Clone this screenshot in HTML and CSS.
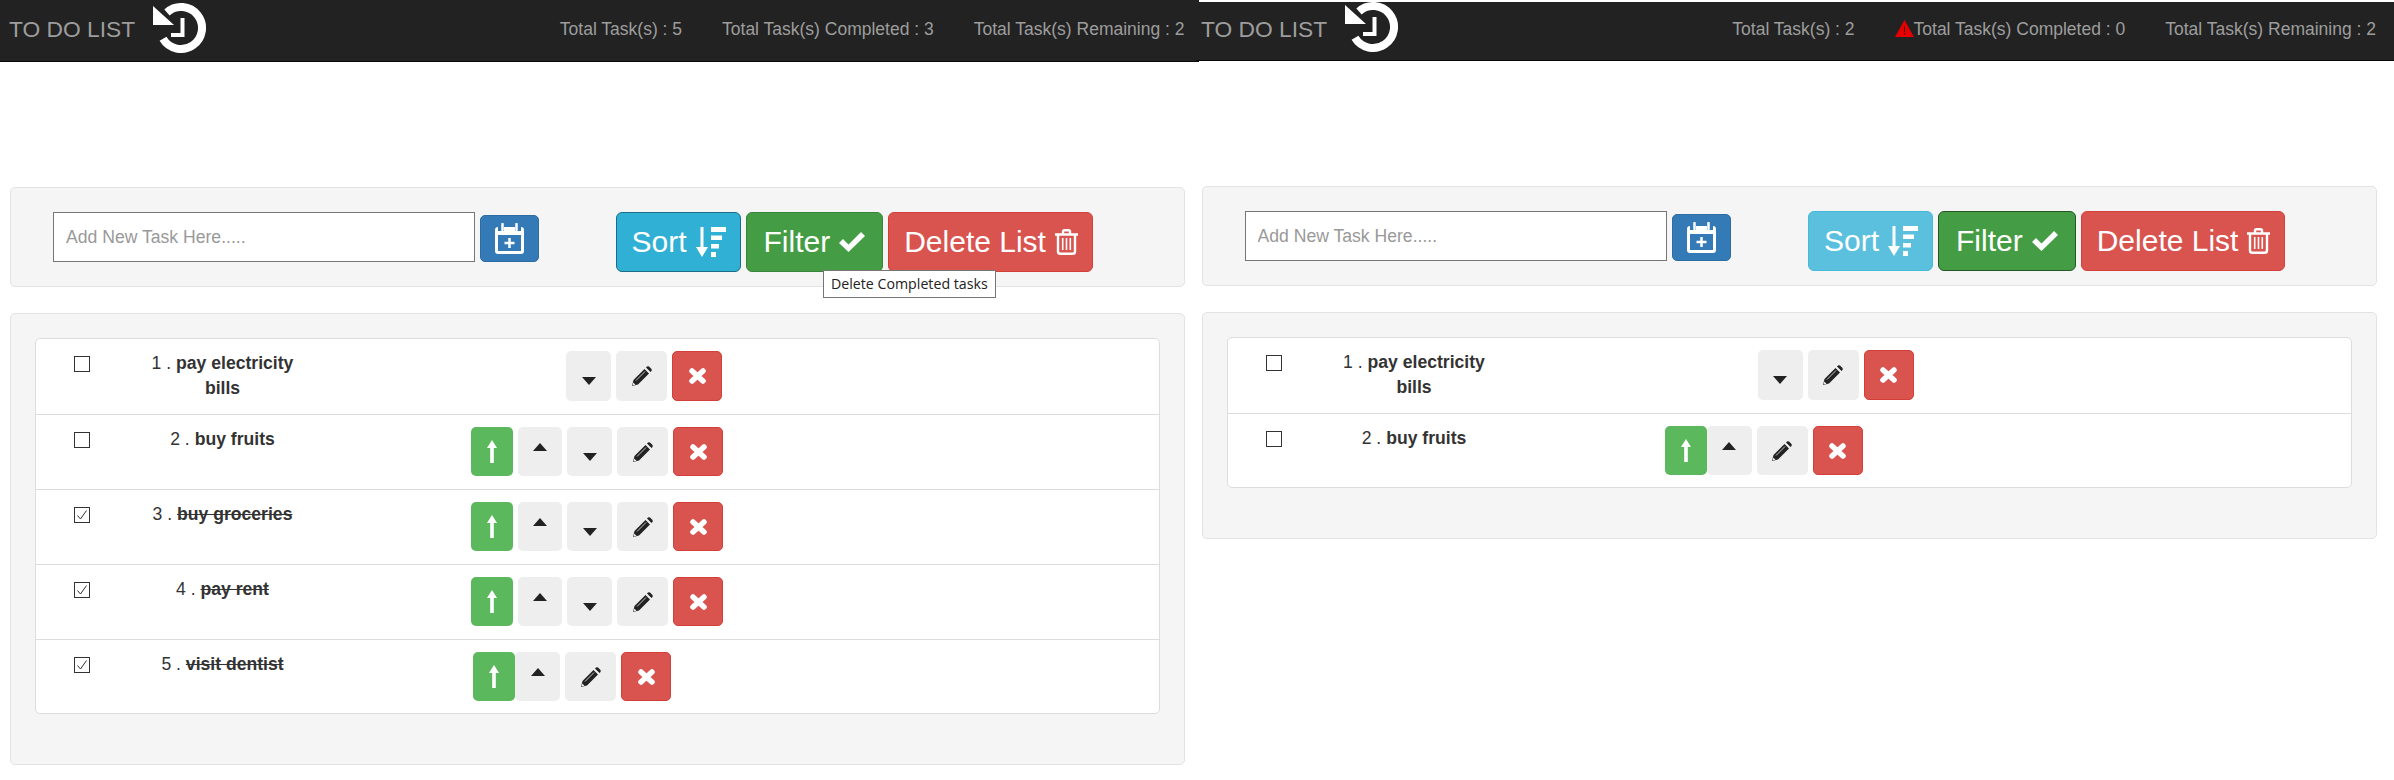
FILE: index.html

```html
<!DOCTYPE html>
<html>
<head>
  <title>To Do List</title>
  <link rel="stylesheet" href="styles.css">
</head>
<body>
  <svg class="sprite" xmlns="http://www.w3.org/2000/svg">
    <symbol id="i-history" viewBox="0 0 56 52">
      <path d="M16 9.4A21 21 0 1 1 12 35.8" fill="none" stroke="currentColor" stroke-width="8"/>
      <path d="M2 3V22H23Z" fill="currentColor"/>
      <path d="M31.5 15V32H20" fill="none" stroke="currentColor" stroke-width="4"/>
    </symbol>
    <symbol id="i-calendar" viewBox="0 0 29 31">
      <path d="M3 4H26Q29 4 29 7V28Q29 31 26 31H3Q0 31 0 28V7Q0 4 3 4ZM3 12V28H26V12Z" fill="currentColor" fill-rule="evenodd"/>
      <path d="M6 4V8M23 4V8" stroke="#337ab7" stroke-width="6"/>
      <path d="M7.5 1V7M21.5 1V7" stroke="currentColor" stroke-width="2.5" stroke-linecap="round"/>
      <path d="M14.5 15V25M9.5 20H19.5" stroke="currentColor" stroke-width="2.5"/>
    </symbol>
    <symbol id="i-sort" viewBox="0 0 30 30">
      <path d="M4.5 0H7.5V20H12L6 30L0 20H4.5ZM15 0H30V5H15ZM15 8.5H26V13H15ZM15 17H23V21.5H15ZM15 25H20V30H15Z" fill="currentColor"/>
    </symbol>
    <symbol id="i-check" viewBox="0 0 26 20">
      <path d="M0 11L4 7L9.5 12.5L22 0L26 4L9.5 20Z" fill="currentColor"/>
    </symbol>
    <symbol id="i-trash" viewBox="0 0 23 26">
      <path d="M0 5.5H23M8 5V2.5Q8 1.2 9.5 1.2H13.5Q15 1.2 15 2.5V5" fill="none" stroke="currentColor" stroke-width="2.4"/>
      <path d="M3 6V22.5Q3 24.8 5.5 24.8H17.5Q20 24.8 20 22.5V6" fill="none" stroke="currentColor" stroke-width="2.4"/>
      <path d="M7.7 9V21M11.5 9V21M15.3 9V21" stroke="currentColor" stroke-width="1.6"/>
    </symbol>
    <symbol id="i-pencil" viewBox="0 0 20 20">
      <path d="M12.5 3L17 7.5L6 18.5L0 20L1.5 14Z" fill="currentColor"/>
      <path d="M14 1.5L15 .5Q16 0 17 .5L19.5 3Q20 4 19.5 5L18.5 6Z" fill="currentColor"/>
      <path d="M4 14.5L13 5.5" stroke="#eee" stroke-width=".8"/>
      <path d="M1.2 16.5L3.5 18.8L.6 19.4Z" fill="#eee"/>
    </symbol>
    <symbol id="i-remove" viewBox="0 0 17 16">
      <path d="M3 3L14 13M14 3L3 13" stroke="currentColor" stroke-width="5.5" stroke-linecap="round"/>
    </symbol>
    <symbol id="i-arrow" viewBox="0 0 10 23">
      <path d="M5 0L10 8H6.8V23H3.2V8H0Z" fill="currentColor"/>
    </symbol>
    <symbol id="i-caret-up" viewBox="0 0 14 8">
      <path d="M7 0L14 8H0Z" fill="currentColor"/>
    </symbol>
    <symbol id="i-caret-down" viewBox="0 0 14 8">
      <path d="M0 0H14L7 8Z" fill="currentColor"/>
    </symbol>
  </svg>

  <div class="page">
    <!-- lista con 5 tareas -->
    <div class="pane pane-a">
      <div class="nav">
        <span class="brand">TO DO LIST</span>
        <svg class="logo"><use href="#i-history"></use></svg>
        <div class="stats">
          <span>Total Task(s) : 5</span>
          <span>Total Task(s) Completed : 3</span>
          <span>Total Task(s) Remaining : 2</span>
        </div>
      </div>

      <div class="panel toolbar">
        <input class="task-input" type="text" placeholder="Add New Task Here.....">
        <button class="btn-add"><svg class="icon-calendar"><use href="#i-calendar"></use></svg></button>
        <button class="btn-big btn-sort btn-sort-focus">Sort <svg class="icon-sort"><use href="#i-sort"></use></svg></button>
        <button class="btn-big btn-filter">Filter <svg class="icon-check"><use href="#i-check"></use></svg></button>
        <button class="btn-big btn-delete">Delete List <svg class="icon-trash"><use href="#i-trash"></use></svg></button>
        <div class="tooltip">Delete Completed tasks</div>
      </div>

      <div class="panel tasks">
        <ul class="list">
          <li class="row row-first">
            <input class="check" type="checkbox">
            <div class="task">1 . <b>pay electricity bills</b></div>
            <div class="actions actions-first">
              <button class="btn btn-green hidden"></button>
              <button class="btn btn-up hidden"></button>
              <button class="btn btn-down"><svg class="icon-caret"><use href="#i-caret-down"></use></svg></button>
              <button class="btn btn-edit"><svg class="icon-pencil"><use href="#i-pencil"></use></svg></button>
              <button class="btn btn-remove"><svg class="icon-remove"><use href="#i-remove"></use></svg></button>
            </div>
          </li>
          <li class="row">
            <input class="check" type="checkbox">
            <div class="task">2 . <b>buy fruits</b></div>
            <div class="actions">
              <button class="btn btn-green"><svg class="icon-arrow"><use href="#i-arrow"></use></svg></button>
              <button class="btn btn-up"><svg class="icon-caret"><use href="#i-caret-up"></use></svg></button>
              <button class="btn btn-down"><svg class="icon-caret"><use href="#i-caret-down"></use></svg></button>
              <button class="btn btn-edit"><svg class="icon-pencil"><use href="#i-pencil"></use></svg></button>
              <button class="btn btn-remove"><svg class="icon-remove"><use href="#i-remove"></use></svg></button>
            </div>
          </li>
          <li class="row">
            <input class="check" type="checkbox" checked>
            <div class="task">3 . <b class="done">buy groceries</b></div>
            <div class="actions">
              <button class="btn btn-green"><svg class="icon-arrow"><use href="#i-arrow"></use></svg></button>
              <button class="btn btn-up"><svg class="icon-caret"><use href="#i-caret-up"></use></svg></button>
              <button class="btn btn-down"><svg class="icon-caret"><use href="#i-caret-down"></use></svg></button>
              <button class="btn btn-edit"><svg class="icon-pencil"><use href="#i-pencil"></use></svg></button>
              <button class="btn btn-remove"><svg class="icon-remove"><use href="#i-remove"></use></svg></button>
            </div>
          </li>
          <li class="row">
            <input class="check" type="checkbox" checked>
            <div class="task">4 . <b class="done">pay rent</b></div>
            <div class="actions">
              <button class="btn btn-green"><svg class="icon-arrow"><use href="#i-arrow"></use></svg></button>
              <button class="btn btn-up"><svg class="icon-caret"><use href="#i-caret-up"></use></svg></button>
              <button class="btn btn-down"><svg class="icon-caret"><use href="#i-caret-down"></use></svg></button>
              <button class="btn btn-edit"><svg class="icon-pencil"><use href="#i-pencil"></use></svg></button>
              <button class="btn btn-remove"><svg class="icon-remove"><use href="#i-remove"></use></svg></button>
            </div>
          </li>
          <li class="row">
            <input class="check" type="checkbox" checked>
            <div class="task">5 . <b class="done">visit dentist</b></div>
            <div class="actions actions-last">
              <button class="btn btn-green"><svg class="icon-arrow"><use href="#i-arrow"></use></svg></button>
              <button class="btn btn-up"><svg class="icon-caret"><use href="#i-caret-up"></use></svg></button>
              <button class="btn btn-edit"><svg class="icon-pencil"><use href="#i-pencil"></use></svg></button>
              <button class="btn btn-remove"><svg class="icon-remove"><use href="#i-remove"></use></svg></button>
            </div>
          </li>
        </ul>
      </div>
    </div>

    <!-- lista con 2 tareas -->
    <div class="pane pane-b">
      <div class="nav">
        <span class="brand">TO DO LIST</span>
        <svg class="logo"><use href="#i-history"></use></svg>
        <div class="stats">
          <span>Total Task(s) : 2</span>
          <span class="warn">
            <svg class="icon-warn" viewBox="0 0 19 17"><path d="M9.5 0L19 17H0Z" fill="#e60000"/><path d="M9 6.5H10V12H9ZM9 13H10V14.5H9Z" fill="#400"/></svg>Total Task(s) Completed : 0
          </span>
          <span>Total Task(s) Remaining : 2</span>
        </div>
      </div>

      <div class="panel toolbar">
        <input class="task-input" type="text" placeholder="Add New Task Here.....">
        <button class="btn-add"><svg class="icon-calendar"><use href="#i-calendar"></use></svg></button>
        <button class="btn-big btn-sort">Sort <svg class="icon-sort"><use href="#i-sort"></use></svg></button>
        <button class="btn-big btn-filter btn-filter-focus">Filter <svg class="icon-check"><use href="#i-check"></use></svg></button>
        <button class="btn-big btn-delete">Delete List <svg class="icon-trash"><use href="#i-trash"></use></svg></button>
      </div>

      <div class="panel tasks">
        <ul class="list">
          <li class="row row-first">
            <input class="check" type="checkbox">
            <div class="task">1 . <b>pay electricity bills</b></div>
            <div class="actions actions-first">
              <button class="btn btn-green hidden"></button>
              <button class="btn btn-up hidden"></button>
              <button class="btn btn-down"><svg class="icon-caret"><use href="#i-caret-down"></use></svg></button>
              <button class="btn btn-edit"><svg class="icon-pencil"><use href="#i-pencil"></use></svg></button>
              <button class="btn btn-remove"><svg class="icon-remove"><use href="#i-remove"></use></svg></button>
            </div>
          </li>
          <li class="row">
            <input class="check" type="checkbox">
            <div class="task">2 . <b>buy fruits</b></div>
            <div class="actions actions-last">
              <button class="btn btn-green"><svg class="icon-arrow"><use href="#i-arrow"></use></svg></button>
              <button class="btn btn-up"><svg class="icon-caret"><use href="#i-caret-up"></use></svg></button>
              <button class="btn btn-edit"><svg class="icon-pencil"><use href="#i-pencil"></use></svg></button>
              <button class="btn btn-remove"><svg class="icon-remove"><use href="#i-remove"></use></svg></button>
            </div>
          </li>
        </ul>
      </div>
    </div>
  </div>
</body>
</html>
```

FILE: styles.css

```css
body {
  margin: 0;
  padding: 0;
  font-family: "Liberation Sans", Arial, sans-serif;
  font-size: 17.6px;
  color: #333;
  background-color: #fff;
}

.sprite {
  display: none;
}

.page {
  display: flex;
  align-items: flex-start;
  height: 780px;
  overflow: hidden;
}

.pane {
  flex: none;
  box-sizing: border-box;
}

.pane-a {
  width: 1199px;
}

.pane-b {
  width: 1198px;
  margin-left: -3px;
  padding-top: 2px;
}

/* barra superior */
.nav {
  display: flex;
  align-items: flex-start;
  box-sizing: border-box;
  height: 62px;
  background-color: #222;
  border-bottom: 1px solid #080808;
  color: #9d9d9d;
}

.pane-a .nav {
  padding: 0 14.5px 0 9px;
}

.pane-b .nav {
  height: 59px;
  padding: 0 18px 0 5px;
}

.brand {
  font-size: 22.8px;
  line-height: 58px;
}

.pane-b .brand {
  line-height: 54px;
}

.logo {
  width: 56px;
  height: 52px;
  margin: 3px 0 0 15.5px;
  color: #fff;
}

.pane-b .logo {
  margin-top: 0;
}

.stats {
  display: flex;
  gap: 40px;
  margin-left: auto;
  font-size: 17.5px;
  line-height: 58px;
}

.pane-b .stats {
  line-height: 54px;
}

.warn {
  display: flex;
  align-items: center;
}

.icon-warn {
  width: 19px;
  height: 17px;
  margin-bottom: 2px;
}

/* paneles */
.panel {
  position: relative;
  box-sizing: border-box;
  background-color: #f5f5f5;
  border: 1px solid #e3e3e3;
  border-radius: 5px;
}

.pane-a .panel {
  margin-left: 10px;
  margin-right: 14px;
}

.pane-b .panel {
  margin-left: 5.5px;
  margin-right: 17px;
}

.toolbar {
  display: flex;
  align-items: flex-start;
  height: 100px;
  margin-top: 125px;
  padding: 24px 0 0 42px;
}

.task-input {
  box-sizing: border-box;
  width: 421.5px;
  height: 50px;
  padding: 0 12px;
  border: 1px solid #767676;
  background-color: #fff;
  font-family: inherit;
  font-size: 17.6px;
}

.pane-b .task-input {
  width: 422.5px;
}

.task-input::placeholder {
  color: #999;
}

.btn-add {
  display: flex;
  align-items: center;
  justify-content: center;
  box-sizing: border-box;
  width: 59px;
  height: 47px;
  margin: 3px 0 0 5px;
  padding: 0;
  background-color: #337ab7;
  border: 1px solid #2e6da4;
  border-radius: 5px;
  color: #fff;
}

.icon-calendar {
  width: 29px;
  height: 31px;
}

.btn-big {
  display: flex;
  align-items: center;
  gap: 9px;
  box-sizing: border-box;
  height: 60px;
  margin-left: 5px;
  padding: 0 14px 0 15px;
  border: 1px solid;
  border-radius: 6px;
  color: #fff;
  font-family: inherit;
  font-size: 30px;
  white-space: nowrap;
}

.btn-sort {
  margin-left: 77px;
  background-color: #5bc0de;
  border-color: #46b8da;
}

.btn-sort-focus {
  background-color: #31b0d5;
  border-color: #1b6d85;
}

.btn-filter {
  padding: 0 17px;
  background-color: #449d44;
  border-color: #398439;
}

.btn-filter-focus {
  border-color: #255625;
}

.btn-delete {
  background-color: #d9534f;
  border-color: #d43f3a;
}

.icon-sort {
  width: 30px;
  height: 30px;
}

.icon-check {
  width: 26px;
  height: 20px;
}

.icon-trash {
  width: 23px;
  height: 26px;
}

.tooltip {
  position: absolute;
  top: 82px;
  left: 812px;
  padding: 0 7px;
  background-color: #fff;
  border: 1px solid #767676;
  color: #222;
  font-family: "Open Sans", sans-serif;
  font-size: 14.2px;
  line-height: 26px;
  white-space: nowrap;
}

/* lista de tareas */
.tasks {
  margin-top: 26px;
  padding: 24px 24px 50px;
}

.list {
  margin: 0;
  padding: 0;
  list-style: none;
  background-color: #fff;
  border: 1px solid #ddd;
  border-radius: 5px;
}

.row {
  display: flex;
  align-items: flex-start;
  padding: 12px 0 13px;
  border-top: 1px solid #ddd;
}

.row:first-child {
  border-top: 0;
}

.row:last-child {
  padding-bottom: 12px;
}

.check {
  flex: none;
  appearance: none;
  box-sizing: border-box;
  width: 16px;
  height: 16px;
  margin: 5px 0 0 38px;
  background-color: #fff;
  border: 1px solid #333;
}

.check:checked {
  background-image: url("data:image/svg+xml,%3Csvg xmlns='http://www.w3.org/2000/svg' viewBox='0 0 14 14'%3E%3Cpath d='M2.5 7.5L5.5 11L11.5 2.5' fill='none' stroke='%23333' stroke-width='1'/%3E%3C/svg%3E");
}

.task {
  flex: none;
  box-sizing: border-box;
  width: 150px;
  margin-left: 57.5px;
  line-height: 25px;
  text-align: center;
}

.done {
  text-decoration: line-through;
}

.actions {
  display: flex;
  gap: 5px;
  margin-left: 173.5px;
}

.actions-first {
  margin-left: 172.5px;
}

.actions-last {
  margin-left: 175.5px;
}

.btn {
  display: flex;
  align-items: center;
  justify-content: center;
  flex: none;
  box-sizing: border-box;
  height: 49px;
  padding: 0;
  background-color: #eee;
  border: 0;
  border-radius: 5px;
  color: #222;
}

.row-first .btn {
  height: 50px;
}

.hidden {
  visibility: hidden;
}

.btn-green {
  width: 42px;
  background-color: #5cb85c;
  color: #fff;
}

.btn-up {
  align-items: flex-start;
  width: 44px;
  padding-top: 16px;
}

.actions-last .btn-green {
  margin-right: -5px;
}

.actions-last .btn-up {
  width: 45px;
}

.btn-down {
  align-items: flex-start;
  width: 45px;
  padding-top: 26px;
}

.btn-edit {
  width: 51px;
}

.btn-remove {
  width: 50px;
  background-color: #d9534f;
  border: 1px solid #d43f3a;
  color: #fff;
}

.icon-arrow {
  width: 10px;
  height: 23px;
}

.icon-caret {
  width: 14px;
  height: 8px;
}

.icon-pencil {
  width: 20px;
  height: 20px;
}

.icon-remove {
  width: 17px;
  height: 16px;
}
```
